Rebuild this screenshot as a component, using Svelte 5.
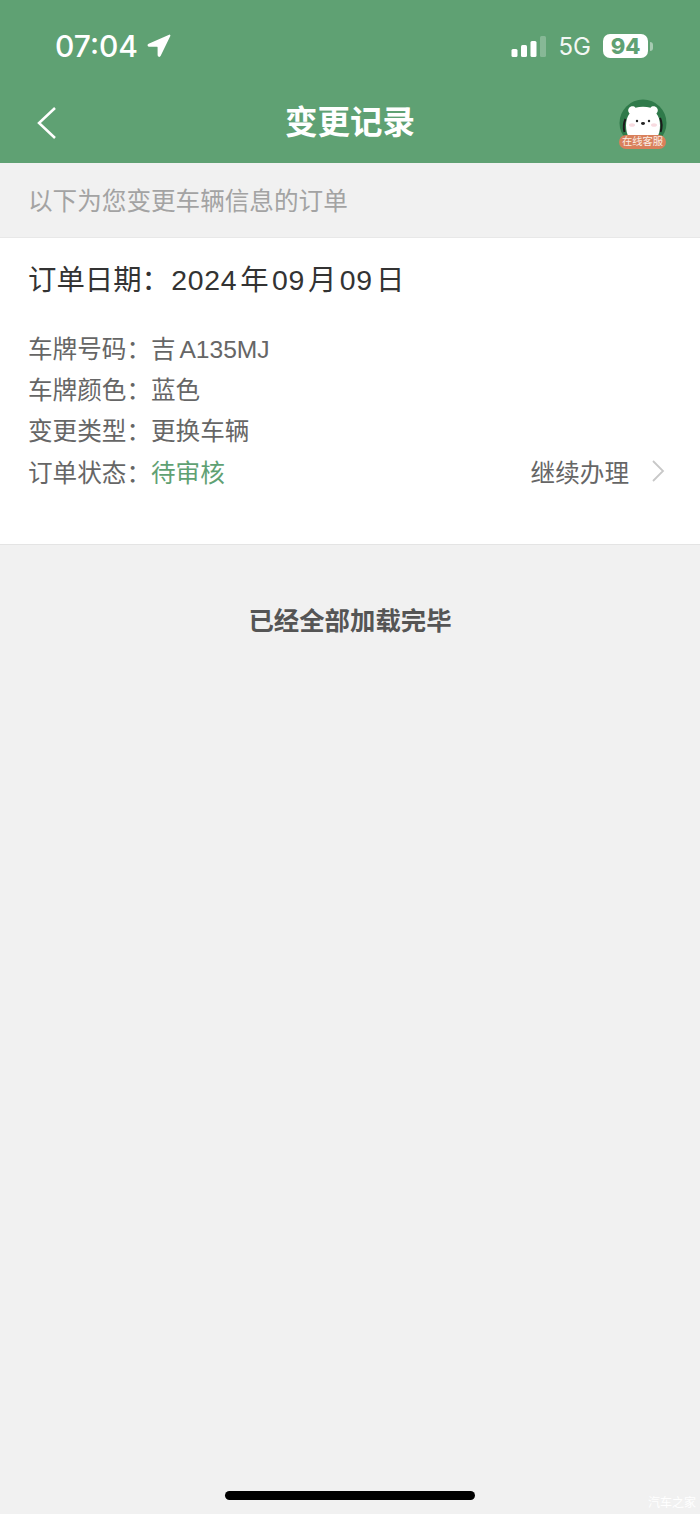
<script>
  const colon = '\uFF1A';
  const rows = [
    { label: '车牌号码' + colon, value: '吉 A135MJ' },
    { label: '车牌颜色' + colon, value: '蓝色' },
    { label: '变更类型' + colon, value: '更换车辆' }
  ];
</script>

<div class="page">
  <header class="head">
    <div class="status">
      <div class="time">
        <span>07:04</span>
        <svg class="loc" width="24" height="24" viewBox="0 0 24 24"><path d="M22.500 1.500 2 10.500c-.9.4-.7 1.400.3 1.400h7.900c.8 0 1.300.5 1.300 1.300v7.900c0 1 1 1.200 1.400.3L22.500 1.500z" fill="#fff" stroke="#fff" stroke-width="1.800" stroke-linejoin="round"/></svg>
      </div>
      <div class="sys">
        <svg class="bars" width="36" height="24" viewBox="0 0 36 24">
          <rect x="0.500" y="14" width="6" height="8" rx="1.500" fill="#fff"/>
          <rect x="10" y="10" width="6" height="12" rx="1.500" fill="#fff"/>
          <rect x="19.500" y="6" width="6" height="16" rx="1.500" fill="#fff"/>
          <rect x="29" y="1" width="6" height="21" rx="1.500" fill="#fff" opacity="0.25"/>
        </svg>
        <span class="net">5G</span>
        <div class="battery"><span class="level">94</span></div>
        <div class="nub"></div>
      </div>
    </div>
    <div class="nav">
      <svg class="back" width="22" height="36" viewBox="0 0 22 36"><path d="M19 3 3 18l16 15" fill="none" stroke="#fff" stroke-width="2.500"/></svg>
      <h1>变更记录</h1>
      <div class="agent">
        <svg width="50" height="52" viewBox="0 0 50 52">
          <circle cx="25" cy="24" r="23.500" fill="#2f7a4a"/>
          <path d="M6.500 33a19 19 0 0 1 1-13" fill="none" stroke="#1b1b1b" stroke-width="2"/>
          <path d="M42 19a19 19 0 0 1 .5 14" fill="none" stroke="#1b1b1b" stroke-width="2"/>
          <path d="M11 9c1.500-2 5-2.300 6.500-.3 4.500-1.300 10.500-1.300 15 0C34 6.700 37.500 7 39 9c1.500 2 .8 4-.6 5.500 2.400 3 3.600 7 3.600 12 0 5-1 9-3 12H11c-2-3-3-7-3-12 0-5 1.200-9 3.600-12C10.200 13 9.500 11 11 9z" fill="#fff"/>
          <ellipse cx="14" cy="26" rx="3" ry="1.800" fill="#f7dbe0"/>
          <ellipse cx="36" cy="26" rx="3" ry="1.800" fill="#f7dbe0"/>
          <circle cx="19" cy="22" r="1.200" fill="#222"/>
          <circle cx="31" cy="22" r="1.200" fill="#222"/>
          <ellipse cx="25" cy="24.500" rx="2" ry="1.400" fill="#222"/>
        </svg>
        <span class="badge">在线客服</span>
      </div>
    </div>
  </header>

  <p class="notice">以下为您变更车辆信息的订单</p>

  <section class="card">
    <div class="date">
      <span class="date-label">订单日期{colon}</span><span class="num">2024</span><span>年</span><span class="num">09</span><span>月</span><span class="num">09</span><span>日</span>
    </div>
    <div class="rows">
      {#each rows as row}
        <div class="row"><span class="label">{row.label}</span><span>{row.value}</span></div>
      {/each}
      <div class="row">
        <span class="label">订单状态{colon}</span><span class="pending">待审核</span>
        <span class="action">继续办理</span>
        <svg class="chev" width="14" height="24" viewBox="0 0 14 24"><path d="M2 2l10 10L2 22" fill="none" stroke="#c8c8c8" stroke-width="1.800"/></svg>
      </div>
    </div>
  </section>

  <p class="end">已经全部加载完毕</p>
  <div class="home"></div>
  <span class="mark">汽车之家</span>
</div>

<style>
  :global(body) {
    margin: 0;
    background: #f1f1f1;
  }
  .page {
    position: relative;
    height: 1514px;
    overflow: hidden;
    background: #f1f1f1;
    font-family: "Liberation Sans", "Noto Sans CJK SC", sans-serif;
    color: #666;
  }
  .head {
    height: 163px;
    background: #5fa173;
    color: #fff;
    box-sizing: border-box;
  }
  .status {
    height: 88px;
    display: flex;
    justify-content: space-between;
    padding: 27px 47px 0 55px;
    box-sizing: border-box;
  }
  .time {
    display: flex;
    align-items: flex-start;
    gap: 9px;
    font-family: Inter, "Liberation Sans", sans-serif;
    font-size: 30px;
    line-height: 38px;
    font-weight: 500;
  }
  .loc {
    margin-top: 7px;
  }
  .sys {
    display: flex;
    align-items: flex-start;
    padding-top: 7px;
  }
  .bars {
    margin: 1px 12px 0 0;
    display: block;
  }
  .net {
    font-family: Inter, "Liberation Sans", sans-serif;
    font-size: 24px;
    line-height: 26px;
    margin-right: 12px;
    opacity: 0.92;
  }
  .battery {
    width: 45px;
    height: 24px;
    background: #fff;
    border-radius: 7px;
    text-align: center;
    color: #5fa173;
  }
  .level {
    font-family: Inter, "Liberation Sans", sans-serif;
    font-size: 22px;
    font-weight: 800;
    line-height: 24px;
    display: block;
  }
  .nub {
    width: 3px;
    height: 9px;
    margin: 8px 0 0 2px;
    background: #fff;
    opacity: 0.45;
    border-radius: 0 3px 3px 0;
  }
  .nav {
    position: relative;
    height: 75px;
    display: flex;
    align-items: center;
    justify-content: center;
  }
  .back {
    position: absolute;
    left: 36px;
    top: 17px;
  }
  h1 {
    margin: 0 0 5px;
    font-size: 32.500px;
    line-height: 40px;
    font-weight: 700;
  }
  .agent {
    position: absolute;
    left: 618px;
    top: 11px;
    width: 50px;
    height: 52px;
  }
  .agent svg {
    display: block;
  }
  .badge {
    position: absolute;
    left: 1px;
    top: 36px;
    width: 47px;
    height: 14px;
    background: #d9805b;
    border-radius: 7px;
    color: #fbeee6;
    font-size: 10.300px;
    line-height: 14px;
    text-align: center;
    white-space: nowrap;
  }
  .notice {
    margin: 0;
    height: 75px;
    padding-left: 28px;
    font-size: 24.600px;
    line-height: 77px;
    color: #a3a3a3;
    box-sizing: border-box;
    border-bottom: 1px solid #e8e8e8;
  }
  .card {
    height: 307px;
    box-sizing: border-box;
    background: #fff;
    padding: 22px 35px 0 28px;
    border-bottom: 1px solid #e4e4e4;
  }
  .date {
    display: flex;
    font-size: 28.400px;
    line-height: 40px;
    color: #333;
    white-space: nowrap;
  }
  .date-label {
    width: 140px;
  }
  .num {
    letter-spacing: 0.700px;
    margin: 0 3.200px;
  }
  .rows {
    margin-top: 26px;
  }
  .row {
    display: flex;
    align-items: center;
    height: 41.300px;
    font-size: 24.600px;
    word-spacing: -3px;
    white-space: nowrap;
  }
  .label {
    width: 123px;
  }
  .pending {
    color: #5fa173;
  }
  .action {
    margin-left: auto;
  }
  .chev {
    margin-left: 22px;
  }
  .end {
    margin: 60px 0 0;
    text-align: center;
    font-size: 25.400px;
    line-height: 32px;
    font-weight: 700;
    color: #555;
  }
  .home {
    position: absolute;
    left: 225px;
    top: 1491px;
    width: 250px;
    height: 9px;
    border-radius: 5px;
    background: #000;
  }
  .mark {
    position: absolute;
    left: 648px;
    top: 1495px;
    font-size: 12px;
    line-height: 16px;
    color: #fff;
    white-space: nowrap;
  }
</style>
